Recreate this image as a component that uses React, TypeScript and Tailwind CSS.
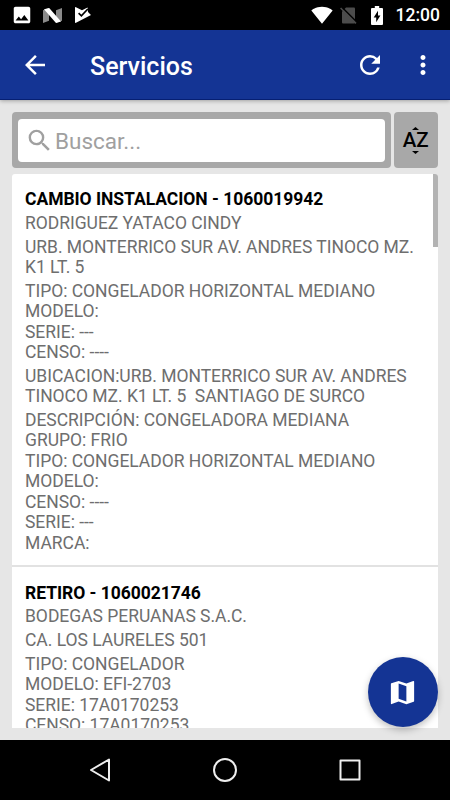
import { useState } from "react";
import {
  MdArrowBack,
  MdImage,
  MdMap,
  MdMoreVert,
  MdRefresh,
  MdSearch,
  MdSignalWifi4Bar,
} from "react-icons/md";

type Service = {
  id: string;
  title: string;
  // every block is a paragraph, its lines are kept together
  blocks: string[][];
};

const services: Service[] = [
  {
    id: "1060019942",
    title: "CAMBIO INSTALACION",
    blocks: [
      ["RODRIGUEZ YATACO CINDY"],
      ["URB. MONTERRICO SUR AV. ANDRES TINOCO MZ.", "K1 LT. 5"],
      ["TIPO: CONGELADOR HORIZONTAL MEDIANO", "MODELO:", "SERIE: ---", "CENSO: ----"],
      ["UBICACION:URB. MONTERRICO SUR AV. ANDRES", "TINOCO MZ. K1 LT. 5  SANTIAGO DE SURCO"],
      [
        "DESCRIPCIÓN: CONGELADORA MEDIANA",
        "GRUPO: FRIO",
        "TIPO: CONGELADOR HORIZONTAL MEDIANO",
        "MODELO:",
        "CENSO: ----",
        "SERIE: ---",
        "MARCA:",
      ],
    ],
  },
  {
    id: "1060021746",
    title: "RETIRO",
    blocks: [
      ["BODEGAS PERUANAS S.A.C."],
      ["CA. LOS LAURELES 501"],
      ["TIPO: CONGELADOR", "MODELO: EFI-2703", "SERIE: 17A0170253", "CENSO: 17A0170253"],
    ],
  },
];

/* Status bar */
function StatusBar() {
  return (
    <div className="flex h-[30px] shrink-0 items-center justify-between bg-black pl-[11px] pr-[10px] text-white">
      <div className="flex items-center">
        <MdImage size={22} />
        <svg className="ml-[10px]" width="19" height="15" viewBox="0 0 19 15">
          <path d="M0 2.2 6 0v12.8L0 15z" fill="#8a8a8a" />
          <path d="M13 2.2 19 0v12.8L13 15z" fill="#8a8a8a" />
          <path d="M1 1.2 6.2 0 18 13.6 13 15z" fill="#fff" />
        </svg>
        <svg className="ml-[13px]" width="17" height="16" viewBox="0 0 17 16">
          <path d="M0 .8Q0-.2 1 .2L7 3.2 12.6.4 13 5l3 3L1 15.8Q0 16.2 0 15.2z" fill="#fff" />
          <path d="M3.6 6.2 6.4 8.8 12.8 2" fill="none" stroke="#000" strokeWidth="1.7" />
        </svg>
      </div>
      <div className="flex items-center">
        <MdSignalWifi4Bar size={22} />
        <svg className="ml-[7px]" width="17" height="17" viewBox="0 0 17 17">
          <path d="M6 .5h8q1 0 1 1v14q0 1-1 1H3q-1 0-1-1V4.5z" fill="#4c4c4c" />
          <path d="M1.6 0 17 15.4" stroke="#000" strokeWidth="1.6" />
          <path d="M.6 1 16 16.4" stroke="#4c4c4c" strokeWidth="1.5" />
        </svg>
        <svg className="ml-[14px]" width="12" height="19" viewBox="0 0 12 19">
          <path d="M3.8 0h4.4v2H11q1 0 1 1v15q0 1-1 1H1q-1 0-1-1V3q0-1 1-1h2.8z" fill="#fff" />
          <path d="M7 4.8 2.7 11.4h2.5v4.8L9.4 9.4H7z" fill="#000" />
        </svg>
        <span className="relative top-px ml-[13px] text-[17.5px] font-medium leading-none">12:00</span>
      </div>
    </div>
  );
}

/* A-Z label with the two carets of the sort icon */
function SortIcon() {
  return (
    <span className="flex flex-col items-center">
      <svg width="7" height="3" viewBox="0 0 7 3">
        <path d="M3.5 0 7 3H0z" fill="#000" />
      </svg>
      <span className="my-[2px] text-[20.5px] font-medium leading-[17px]">AZ</span>
      <svg width="7" height="3" viewBox="0 0 7 3">
        <path d="M0 0h7L3.5 3z" fill="#000" />
      </svg>
    </span>
  );
}

function ServiceItem({ service }: { service: Service }) {
  return (
    <div className="flex flex-col gap-[3.2px] border-b-2 border-[#e2e2e2] px-[13px] pb-[12px] pt-[15.4px] text-[17.5px] leading-[20.47px] text-[#6e6e6e]">
      <h2 className="font-bold tracking-[-0.04px] text-black">
        {service.title} - {service.id}
      </h2>
      {service.blocks.map((lines, i) => (
        <p key={i} className="whitespace-pre tracking-[-0.03px]">
          {lines.join("\n")}
        </p>
      ))}
    </div>
  );
}

export default function App() {
  const [query, setQuery] = useState("");

  return (
    <div className="flex h-[800px] w-[450px] flex-col overflow-hidden bg-[#e6e6e6] font-[Roboto,sans-serif]">
      <StatusBar />

      {/* App bar */}
      <header className="flex h-[70px] shrink-0 items-center border-b border-[#061f73] bg-[#143494] pl-5 pr-[12.5px] text-white shadow-[0_1px_4px_rgba(0,0,0,0.3)]">
        <button>
          <MdArrowBack size={30} />
        </button>
        <h1 className="ml-10 flex-1 pt-[3px] text-[25px] font-medium leading-none">Servicios</h1>
        <button>
          <MdRefresh size={30} />
        </button>
        <button className="ml-[22.5px]">
          <MdMoreVert size={30} />
        </button>
      </header>

      {/* Content */}
      <main className="relative flex min-h-0 flex-1 flex-col gap-1.5 pb-[12.5px] pl-3 pr-[12.5px] pt-3">
        <div className="flex h-14 shrink-0 gap-[3px]">
          <div className="w-[379px] rounded bg-[#a8a8a8] px-1.5 pb-1.5 pt-[7px]">
            <label className="flex h-full items-center rounded bg-white pl-[7px]">
              <MdSearch size={29} className="shrink-0 text-[#a0a0a0]" />
              <input
                value={query}
                onChange={(e) => setQuery(e.target.value)}
                placeholder="Buscar..."
                className="w-full pl-px pt-[3px] text-[22.5px] outline-none placeholder:text-[#a0a0a0]"
              />
            </label>
          </div>
          <button className="flex flex-1 items-center justify-center rounded bg-[#a8a8a8] text-black">
            <SortIcon />
          </button>
        </div>

        <div className="relative min-h-0 flex-1 overflow-hidden rounded-t-[3px] bg-white">
          {services.map((s) => (
            <ServiceItem key={s.id} service={s} />
          ))}
          <div className="absolute right-0 top-0 h-[73px] w-[5px] bg-[#b3b3b3]" />
        </div>

        <button className="absolute bottom-[13px] right-[12.5px] flex size-[70px] items-center justify-center rounded-full bg-[#143494] text-white shadow-[0_3px_7px_rgba(0,0,0,0.25)]">
          <MdMap size={31} />
        </button>
      </main>

      {/* Navigation bar */}
      <nav className="flex h-[60px] shrink-0 items-center justify-center gap-[95px] bg-black">
        <svg width="30" height="30" viewBox="0 0 30 30" fill="none" stroke="#eee" strokeWidth="2" strokeLinejoin="round">
          <path d="M24 4.5v21L6 15z" />
        </svg>
        <svg width="30" height="30" viewBox="0 0 30 30" fill="none" stroke="#eee" strokeWidth="2">
          <circle cx="15" cy="15" r="11" />
        </svg>
        <svg width="30" height="30" viewBox="0 0 30 30" fill="none" stroke="#eee" strokeWidth="2" strokeLinejoin="round">
          <path d="M5.5 5.5h19v19h-19z" />
        </svg>
      </nav>
    </div>
  );
}
